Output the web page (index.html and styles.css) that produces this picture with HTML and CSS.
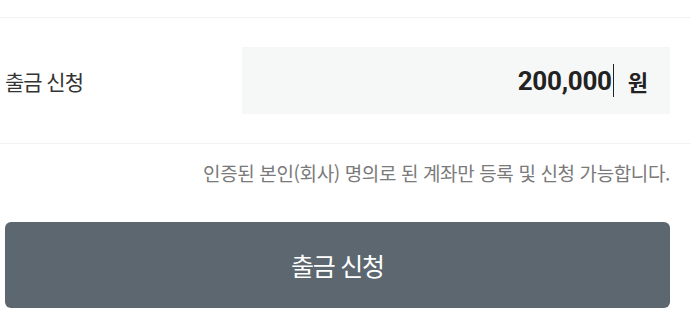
FILE: index.html
```html
<!DOCTYPE html>
<html lang="ko">
<head>
<meta charset="utf-8">
<link rel="stylesheet" href="styles.css">
</head>
<body>
<div class="page">
  <div class="row">
    <span class="label">출금 신청</span>
    <div class="amount-box">
      <span class="amount">200,000</span><span class="caret"></span><span class="unit">원</span>
    </div>
  </div>
  <p class="notice">인증된 본인(회사) 명의로 된 계좌만 등록 및 신청 가능합니다.</p>
  <button class="submit" type="button">출금 신청</button>
</div>
</body>
</html>
```
FILE: styles.css
```css
html, body {
  margin: 0;
  padding: 0;
  background: #ffffff;
}
.page {
  width: 665px;
  padding: 17px 0 0 5px;
  font-family: "Noto Sans CJK KR", "Noto Sans", sans-serif;
}
.row {
  display: flex;
  align-items: center;
  justify-content: space-between;
  border-top: 1px solid #f1f2f2;
  border-bottom: 1px solid #f1f2f2;
  padding: 29px 21px 29px 5px;
  margin: 0 -21px 0 -5px;
}
.label {
  font-size: 21px;
  letter-spacing: -0.05em;
  color: #333333;
}
.amount-box {
  width: 428px;
  height: 67px;
  box-sizing: border-box;
  background: #f6f8f7;
  display: flex;
  align-items: center;
  justify-content: flex-end;
  padding-right: 22px;
}
.amount {
  font-family: Roboto, "Liberation Sans", sans-serif;
  font-weight: 700;
  font-size: 26px;
  letter-spacing: -0.01em;
  color: #222222;
}
.caret {
  width: 1px;
  height: 33px;
  background: #222222;
  margin-left: 1px;
}
.unit {
  font-weight: 700;
  font-size: 22px;
  color: #222222;
  margin-left: 14px;
}
.notice {
  margin: 15px 0 0;
  text-align: right;
  font-size: 19px;
  line-height: 28px;
  letter-spacing: -0.02em;
  color: #7a7a7a;
}
.submit {
  display: block;
  width: 665px;
  height: 86px;
  margin-top: 35px;
  border: none;
  border-radius: 6px;
  background: #5c6770;
  color: #ffffff;
  font-family: "Noto Sans CJK KR", "Noto Sans", sans-serif;
  font-size: 25px;
  letter-spacing: -0.05em;
  padding: 0;
}
```
